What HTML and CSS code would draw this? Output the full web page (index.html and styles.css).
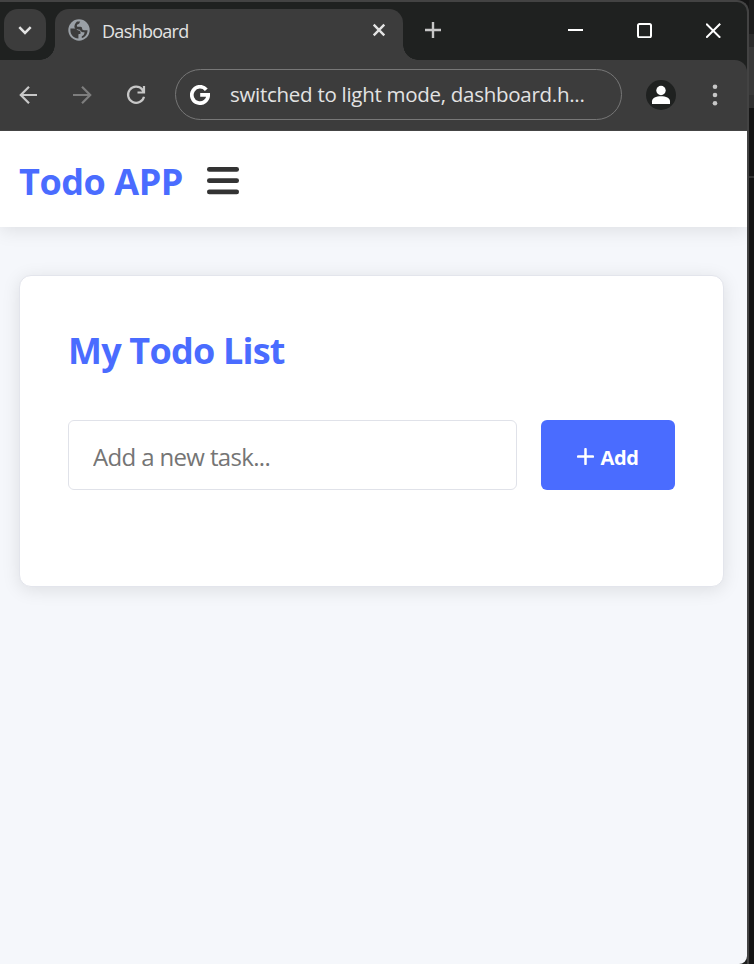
FILE: index.html
```html
<!DOCTYPE html>
<html lang="en">
<head>
<meta charset="utf-8">
<title>Dashboard</title>
<link rel="stylesheet" href="styles.css">
</head>
<body>
<div class="window">
  <div class="tabstrip">
    <button class="tab-search" aria-label="Search tabs"><svg width="42" height="42" viewBox="0 0 42 42"><path d="M15.3 18.200l5.700 5.700 5.700-5.700" fill="none" stroke="#e3e3e3" stroke-width="2.500"/></svg></button>
    <div class="tab">
      <svg class="globe" width="22" height="22" viewBox="0 0 22 22"><circle cx="11" cy="11" r="10.700" fill="#9aa0a6"/><path d="M2.400 9.600H6.500C8.500 9.600 9 11.300 10.300 11.600 12.500 11.800 12.700 13 12.500 14.700L10.400 15.300V19.500C5.600 19.300 2.400 15.700 2.400 11.500zM12.300 2.500C11.500 3.200 11.800 4.500 10.500 4.900 8.500 5.300 8.700 6.700 9.300 7.800H12.500C14.300 7.900 13.900 9.700 14.500 10.700 16 11.500 17.800 11.200 19.500 11.200 19.500 15 17.200 18 13.800 19.100V17.300C16 16.500 16.500 14.600 16.500 13.200 14.500 13.400 12.800 12.700 12.200 11.200 11 10 8 11 6.700 9 5.800 7.200 7 4.300 9 2.600z" fill="#3c3c3c"/></svg>
      <span class="tab-title">Dashboard</span>
      <svg class="tab-close" width="14" height="14" viewBox="0 0 14 14"><path d="M1.700 1.700l10.600 10.600M12.300 1.700L1.700 12.300" stroke="#e3e3e3" stroke-width="2.400"/></svg>
    </div>
    <svg class="new-tab" width="16" height="16" viewBox="0 0 16 16"><path d="M8 0v16M0 8h16" stroke="#c7c7c7" stroke-width="2.400"/></svg>
    <div class="controls">
      <svg width="15" height="16" viewBox="0 0 15 16"><path d="M0 8h15" stroke="#fff" stroke-width="2"/></svg>
      <svg width="15" height="16" viewBox="0 0 15 16"><rect x="1" y="2" width="13" height="13.200" rx="1.500" fill="none" stroke="#fff" stroke-width="2"/></svg>
      <svg width="16" height="16" viewBox="0 0 16 16"><path d="M.2 1.700l14 14M14.200 1.700l-14 14" stroke="#fff" stroke-width="2"/></svg>
    </div>
  </div>
  <div class="toolbar">
    <svg class="nav" width="20" height="20" viewBox="0 0 20 20"><path d="M19 10H2.500M11 1.800L2.800 10l8.200 8.200" fill="none" stroke="#c7c7c7" stroke-width="2.200"/></svg>
    <svg class="nav" width="20" height="20" viewBox="0 0 20 20"><path d="M1 10h17M10 1.800L18.200 10 10 18.200" fill="none" stroke="#7d7d7d" stroke-width="2.200"/></svg>
    <svg class="nav" width="20" height="20" viewBox="0 0 20 20"><path d="M16.300 4.500A8.100 8.100 0 1 0 18 11.700M18 1v6.500h-6.500M18 7.200l-2.700-3.500" fill="none" stroke="#c7c7c7" stroke-width="2.200"/></svg>
    <div class="omnibox">
      <svg width="20" height="20" viewBox="0 0 20 20"><path d="M16.300 4.700A8.200 8.200 0 1 0 18.200 9.900H10.200" fill="none" stroke="#fff" stroke-width="3.700"/></svg>
      <span>switched to light mode, dashboard.h...</span>
    </div>
    <svg class="avatar" width="30" height="30" viewBox="0 0 30 30"><circle cx="15" cy="15" r="15" fill="#1f2120"/><circle cx="15" cy="10.500" r="4.700" fill="#fff"/><path d="M6 24v-2.800C6 18.300 10 16.300 15 16.300s9 2 9 4.900V24z" fill="#fff"/></svg>
    <svg class="dots" width="6" height="22" viewBox="0 0 6 22"><g fill="#c7c7c7"><circle cx="3" cy="2.800" r="2.300"/><circle cx="3" cy="11" r="2.300"/><circle cx="3" cy="19.200" r="2.300"/></g></svg>
  </div>
  <div class="page">
    <header class="header">
      <h1>Todo APP</h1>
      <svg width="32" height="28" viewBox="0 0 32 28"><g fill="#333"><rect y="0" width="32" height="4.800" rx="2.300"/><rect y="11.300" width="32" height="4.800" rx="2.300"/><rect y="22.500" width="32" height="4.800" rx="2.300"/></g></svg>
    </header>
    <main class="card">
      <h2>My Todo List</h2>
      <form class="task-form">
        <input type="text" placeholder="Add a new task...">
        <button type="button"><svg width="17" height="17" viewBox="0 0 17 17"><path d="M8.500 1.100v14.800M1.100 8.500h14.800" stroke="#fff" stroke-width="2.500" stroke-linecap="round"/></svg><span>Add</span></button>
      </form>
    </main>
  </div>
</div>
<div class="backdrop"><div class="strip-top"></div><div class="strip-bar"></div><div class="strip-panel"></div><div class="strip-low"></div></div>
</body>
</html>
```
FILE: styles.css
```css
* { box-sizing: border-box; }
body { margin: 0; width: 754px; height: 964px; display: flex; background: #151515; overflow: hidden; font-family: "Open Sans", "Noto Sans", sans-serif; }
svg { display: block; flex: none; }
h1, h2 { margin: 0; font-weight: 700; color: #4a6cff; white-space: nowrap; }
span { white-space: nowrap; }
.window { width: 749px; height: 964px; flex: none; display: flex; flex-direction: column; background: #1f2120; border: solid #434343; border-width: 2px 2px 0 0; border-radius: 0 12px 0 0; overflow: hidden; }
.tabstrip { height: 58px; flex: none; display: flex; align-items: flex-start; }
.tab-search { width: 42px; height: 42px; margin: 7px 9px 0 4px; padding: 0; border: 0; border-radius: 14px; background: #3c3c3c; }
.tab { position: relative; width: 348px; height: 51px; margin-top: 7px; padding: 0 17px 9px 13px; display: flex; align-items: center; background: #3c3c3c; border-radius: 14px 14px 0 0; }
.tab::before, .tab::after { content: ""; position: absolute; bottom: 0; width: 15px; height: 15px; }
.tab::before { left: -15px; background: radial-gradient(circle at 0 0, transparent 14.500px, #3c3c3c 15px); }
.tab::after { right: -15px; background: radial-gradient(circle at 100% 0, transparent 14.500px, #3c3c3c 15px); }
.tab-title { margin: 1px 0 0 12px; font-size: 18px; line-height: 24px; letter-spacing: -.7px; color: #e3e3e3; }
.tab-close { margin-left: auto; }
.new-tab { margin: 20px 0 0 22px; }
.controls { display: flex; gap: 54px; margin: 20px 0 0 127px; }
.toolbar { height: 71px; flex: none; display: flex; align-items: center; padding: 0 29px 1px 18px; background: #3c3c3c; border-bottom: 1px solid #444; border-top-right-radius: 12px; }
.nav { margin-right: 34px; }
.omnibox { width: 447px; height: 51px; margin-left: -5px; padding-left: 14px; display: flex; align-items: center; gap: 20px; border: 1.500px solid #777; border-radius: 26px; color: #e3e3e3; font-size: 20.500px; letter-spacing: -.28px; }
.omnibox span { padding-bottom: 2px; }
.avatar { margin-left: 24px; }
.dots { margin-left: auto; }
.page { flex: 1; background: #f5f7fb; border-bottom-right-radius: 8px; overflow: hidden; }
.header { height: 96px; padding: 4px 0 0 19px; display: flex; align-items: center; gap: 24px; background: #fff; box-shadow: 0 3px 18px rgba(0,0,0,.1); }
.header h1 { width: 164px; padding-top: 1px; font-size: 36px; line-height: 50px; letter-spacing: -.45px; }
.card { width: 705px; height: 312px; margin: 48px 0 0 19px; padding: 48px; background: #fff; border: 1px solid #e3e5ec; border-radius: 12px; box-shadow: 0 3px 18px rgba(0,0,0,.1); }
.card h2 { font-size: 36px; line-height: 54px; letter-spacing: -.8px; }
.task-form { display: flex; gap: 24px; margin-top: 42px; }
.task-form input { width: 449px; height: 70px; padding: 2px 24px 0; border: 1px solid #e0e2e9; border-radius: 6px; font: 24px "Open Sans", sans-serif; letter-spacing: -.65px; background: #fff; }
.task-form input::placeholder { color: #757575; opacity: 1; }
.task-form button { width: 134px; height: 70px; padding: 3px 0 0; display: flex; align-items: center; justify-content: center; gap: 6px; border: 0; border-radius: 6px; background: #4a6cff; color: #fff; font: 700 20px "Open Sans", sans-serif; letter-spacing: -.3px; }
.task-form button span { padding-top: 1px; }
.backdrop { width: 5px; }
.strip-top { height: 34px; background: #1c1c1c; }
.strip-bar { height: 13px; background: #2b2b2b; }
.strip-panel { height: 61px; background: #383838; border-bottom: 13px solid #303030; }
.strip-low { height: 70px; border-bottom: 2px solid #333; }
```
